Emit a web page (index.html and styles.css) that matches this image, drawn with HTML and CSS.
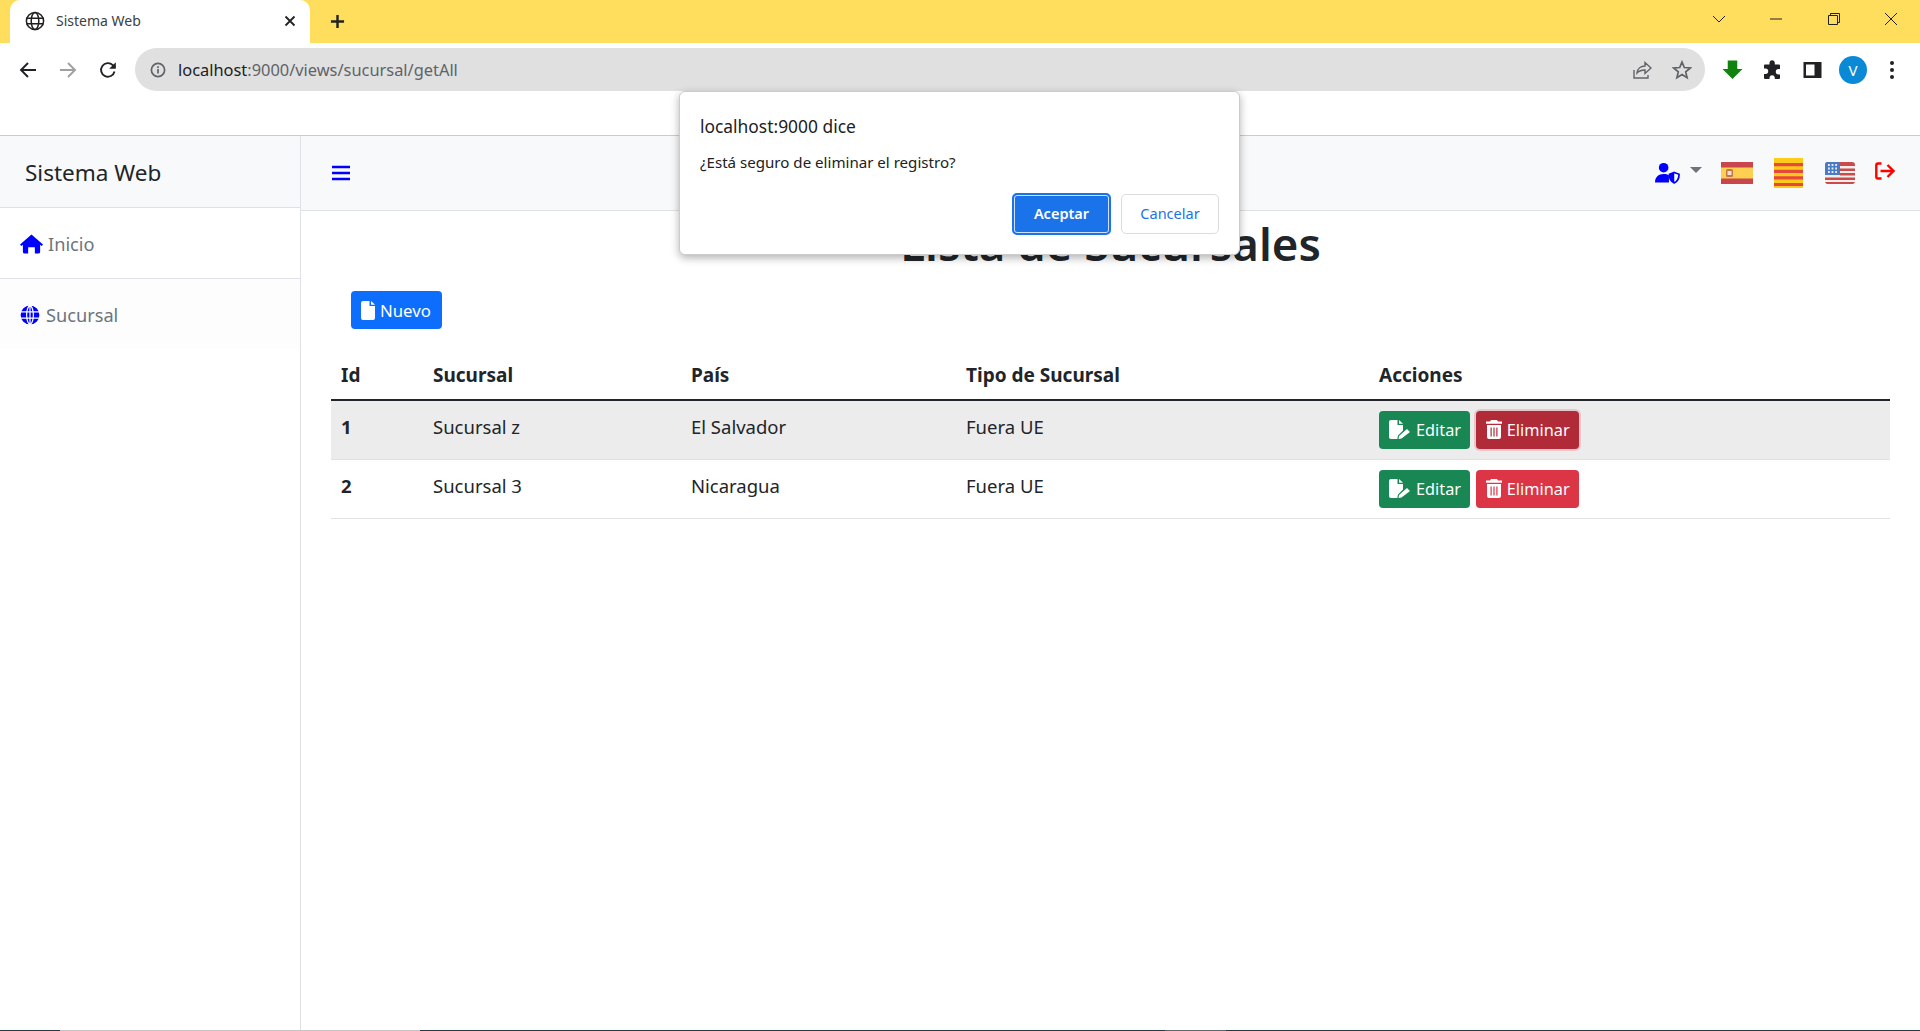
FILE: index.html
```html
<!DOCTYPE html>
<html lang="es">
<head>
  <meta charset="UTF-8" />
  <meta name="viewport" content="width=device-width, initial-scale=1.0"/>
  <title>Sistema Web</title>
  <link rel="stylesheet" href="styles.css">
</head>
<body>
  <!-- Barra de pestañas -->
  <div class="tabstrip">
    <div class="tab">
      <svg class="tab-globe" viewBox="0 0 20 20"><circle cx="10" cy="10" r="8.6"/><ellipse cx="10" cy="10" rx="3.8" ry="8.6"/><path d="M1.4 7.2h17.2M1.4 12.8h17.2"/></svg>
      <span class="tab-title">Sistema Web</span>
      <svg class="tab-close" viewBox="0 0 12 12"><path d="M1.5 1.5l9 9M10.5 1.5l-9 9"/></svg>
    </div>
    <svg class="tab-new" viewBox="0 0 16 16"><path d="M8 1v14M1 8h14"/></svg>
    <div class="window-controls">
      <svg viewBox="0 0 14 8"><path d="M1 1l6 6 6-6"/></svg>
      <svg viewBox="0 0 14 14"><path d="M1 7h12"/></svg>
      <svg viewBox="0 0 14 14"><path d="M1.5 3.5h9v9h-9zM3.5 3.5v-2h9v9h-2"/></svg>
      <svg viewBox="0 0 14 14"><path d="M1 1l12 12M13 1L1 13"/></svg>
    </div>
  </div>

  <!-- Barra de direcciones -->
  <div class="toolbar">
    <div class="nav-buttons">
      <svg viewBox="0 0 18 18"><path d="M17 9H2M9 2L2 9l7 7"/></svg>
      <svg class="disabled" viewBox="0 0 18 18"><path d="M1 9h15M9 2l7 7-7 7"/></svg>
      <svg viewBox="0 0 18 18"><path d="M15.5 10.5A6.8 6.8 0 1 1 13.8 4.2L16 6.4"/><path class="solid" d="M16.8 1.2v6.6h-6.6z"/></svg>
    </div>
    <div class="omnibox">
      <svg class="info-icon" viewBox="0 0 16 16"><circle cx="8" cy="8" r="6.6"/><path d="M8 7v4.6M8 4.2v1.7"/></svg>
      <span class="url"><span class="url-host">localhost</span>:9000/views/sucursal/getAll</span>
      <svg class="omni-share" viewBox="0 0 20 20"><path d="M2 10v8h14v-3M5 13c.5-4.5 4-7 8-7V2.500l6 5.500-6 5.500V10c-3.500 0-6 1-8 3z"/></svg>
      <svg class="omni-star" viewBox="0 0 20 20"><path d="M10 2l2.300 5.500 6 .5-4.600 3.900 1.400 5.800L10 14.600l-5.100 3.100 1.400-5.800L1.700 8l6-.5z"/></svg>
    </div>
    <div class="ext-buttons">
      <svg viewBox="0 0 22 20"><path class="ext-arrow" d="M6 0h10v9h5.500L11 19.500.5 9H6z"/></svg>
      <svg viewBox="0 0 20 20"><path class="ext-dark" d="M7 2.500a2.700 2.700 0 0 1 5.300 0V4.500h4.200a1 1 0 0 1 1 1V9h-1.500a2.700 2.700 0 0 0 0 5.400h1.500V18a1 1 0 0 1-1 1H12.300v-1.500a2.700 2.700 0 0 0-5.300 0V19H2.500a1 1 0 0 1-1-1v-4H3a2.700 2.700 0 0 0 0-5.400H1.500V5.500a1 1 0 0 1 1-1H7z"/></svg>
      <svg class="ext-panel" viewBox="0 0 20 20"><path class="ext-dark" d="M1 2h18v16H1zm2.500 2.500v11H12v-11z"/></svg>
      <span class="avatar">V</span>
      <svg viewBox="0 0 6 20"><circle class="ext-dark" cx="3" cy="3" r="2"/><circle class="ext-dark" cx="3" cy="10" r="2"/><circle class="ext-dark" cx="3" cy="17" r="2"/></svg>
    </div>
  </div>
  <div class="bookmarks"></div>

  <!-- Aplicacion -->
  <div class="app">
    <aside class="sidebar">
      <div class="brand">Sistema Web</div>
      <a class="side-link">
        <svg class="side-home" viewBox="0 0 24 20"><path d="M12 0l12 10.500-1.400 1.500-1.600-1.300V18a2 2 0 0 1-2 2h-3.500v-6.500h-7V20H5a2 2 0 0 1-2-2v-7.300L1.400 12 0 10.500z"/></svg>
        Inicio
      </a>
      <a class="side-link side-link-last">
        <svg class="side-globe" viewBox="0 0 20 20"><circle cx="10" cy="10" r="10"/><path d="M0 6.800h20M0 13.200h20M10 0v20M10 0C5.500 4 5.500 16 10 20M10 0c4.500 4 4.500 16 0 20"/></svg>
        Sucursal
      </a>
    </aside>

    <main class="content">
      <nav class="topnav">
        <svg class="nav-bars" viewBox="0 0 18 16"><path d="M0 2h18M0 8h18M0 14h18"/></svg>
        <div class="nav-right">
          <svg class="nav-user" viewBox="0 0 26 22"><circle cx="9" cy="5.500" r="5"/><path d="M0 21c0-6 3.500-9 9-9 2.200 0 4 .5 5.500 1.400V21z"/><path class="shield" d="M20 10.500l5 1.800c0 4.500-1.500 7.500-5 9-3.500-1.500-5-4.500-5-9z"/><path d="M20 10.500v10.800c-3.500-1.500-5-4.500-5-9z"/></svg>
          <span class="nav-caret"></span>
          <svg class="flag flag-es" viewBox="0 0 32 22"><rect width="32" height="22" fill="#c8464c"/><rect y="5.500" width="32" height="11" fill="#fdd04f"/><rect x="5" y="7" width="7" height="8" rx="1.500" fill="#c9744c"/><path d="M6.500 9h4v4h-4z" fill="#f2e3d0"/></svg>
          <svg class="flag flag-cat" viewBox="0 0 29 30"><rect width="29" height="30" fill="#fdcb1c"/><path d="M0 5h29v3.300H0zM0 11.700h29V15H0zM0 18.300h29v3.300H0zM0 25h29v3H0z" fill="#e8483a"/></svg>
          <svg class="flag flag-us" viewBox="0 0 30 22"><rect width="30" height="22" rx="3" fill="#f3eeee"/><path d="M3 0h24a3 3 0 0 1 3 3v1H0V3a3 3 0 0 1 3-3zM15 6.500h15V9H15zM15 11h15v2.500H15zM0 15.500h30V18H0zM0 20h30a3 3 0 0 1-3 2H3a3 3 0 0 1-3-2z" fill="#cb4a4a"/><path d="M3 0h12v13H0V3a3 3 0 0 1 3-3z" fill="#4a7cc4"/><path d="M3 3h9M3 6.500h9M3 10h9" stroke="#e8edf7" stroke-width="1.800" stroke-dasharray="1.800 1.800"/></svg>
          <svg class="nav-logout" viewBox="0 0 20 18"><path d="M6.500 1.500H3A1.800 1.800 0 0 0 1.300 3.300v11.400A1.800 1.800 0 0 0 3 16.500h3.500M5.500 9h13M12.500 3l6 6-6 6"/></svg>
        </div>
      </nav>

      <div class="page">
        <h1 class="page-title">Lista de Sucursales</h1>
        <button class="btn btn-primary btn-new">
          <svg class="btn-icon" viewBox="0 0 14 19"><path d="M2 0h6.500v5H14v12a2 2 0 0 1-2 2H2a2 2 0 0 1-2-2V2a2 2 0 0 1 2-2zM10 0l4 3.700H10z"/></svg>
          Nuevo
        </button>

        <table class="grid">
          <thead>
            <tr>
              <th class="col-id">Id</th>
              <th class="col-name">Sucursal</th>
              <th class="col-country">País</th>
              <th class="col-type">Tipo de Sucursal</th>
              <th>Acciones</th>
            </tr>
          </thead>
          <tbody>
            <tr class="row-hover">
              <td class="cell-id">1</td>
              <td>Sucursal z</td>
              <td>El Salvador</td>
              <td>Fuera UE</td>
              <td class="cell-actions">
                <button class="btn btn-success">
                  <svg class="btn-icon icon-edit" viewBox="0 0 22 19"><path d="M2 0h6.500v5H14v5.500L9 15.500 8.300 19H2a2 2 0 0 1-2-2V2a2 2 0 0 1 2-2zM10 0l4 3.700H10zM18 9l3 3-8.500 6.500-3 .5.500-3z"/></svg>
                  Editar
                </button>
                <button class="btn btn-danger-active">
                  <svg class="btn-icon icon-trash" viewBox="0 0 16 19"><path d="M5 0h6l1 1.500h4v2.300H0V1.500h4zM1 5h14v12a2 2 0 0 1-2 2H3a2 2 0 0 1-2-2zM4.500 7.500v9h1.200v-9zm2.900 0v9h1.200v-9zm2.900 0v9h1.200v-9z" fill-rule="evenodd"/></svg>
                  Eliminar
                </button>
              </td>
            </tr>
            <tr>
              <td class="cell-id">2</td>
              <td>Sucursal 3</td>
              <td>Nicaragua</td>
              <td>Fuera UE</td>
              <td class="cell-actions">
                <button class="btn btn-success">
                  <svg class="btn-icon icon-edit" viewBox="0 0 22 19"><path d="M2 0h6.500v5H14v5.500L9 15.500 8.300 19H2a2 2 0 0 1-2-2V2a2 2 0 0 1 2-2zM10 0l4 3.700H10zM18 9l3 3-8.500 6.500-3 .5.500-3z"/></svg>
                  Editar
                </button>
                <button class="btn btn-danger">
                  <svg class="btn-icon icon-trash" viewBox="0 0 16 19"><path d="M5 0h6l1 1.500h4v2.300H0V1.500h4zM1 5h14v12a2 2 0 0 1-2 2H3a2 2 0 0 1-2-2zM4.500 7.500v9h1.200v-9zm2.900 0v9h1.200v-9zm2.900 0v9h1.200v-9z" fill-rule="evenodd"/></svg>
                  Eliminar
                </button>
              </td>
            </tr>
          </tbody>
        </table>
      </div>
    </main>
  </div>

  <!-- Borde de la barra de tareas -->
  <div class="screen-edge">
    <span class="edge-dark edge-a"></span>
    <span class="edge-light edge-b"></span>
    <span class="edge-dark edge-c"></span>
    <span class="edge-mid edge-d"></span>
    <span class="edge-dark edge-e"></span>
  </div>

  <!-- Cuadro confirm() -->
  <div class="dialog">
    <div class="dialog-title">localhost:9000 dice</div>
    <div class="dialog-msg">¿Está seguro de eliminar el registro?</div>
    <div class="dialog-actions">
      <button class="dialog-btn dialog-ok">Aceptar</button>
      <button class="dialog-btn dialog-cancel">Cancelar</button>
    </div>
  </div>
</body>
</html>
```

FILE: styles.css
```css
* {
  box-sizing: border-box;
}

html, body {
  height: 100%;
}

body {
  margin: 0;
  font-family: 'Noto Sans', 'Open Sans', sans-serif;
  color: #212529;
  background-color: white;
  display: flex;
  flex-direction: column;
  min-height: 100vh;
  overflow: hidden;
}

svg {
  display: block;
  flex: none;
}

/* Pestañas */
.tabstrip {
  height: 43px;
  background-color: #ffde5e;
  display: flex;
  align-items: flex-end;
  padding-left: 10px;
}

.tab {
  width: 300px;
  height: 43px;
  background: white;
  border-radius: 10px 10px 0 0;
  display: flex;
  align-items: center;
  padding: 0 14px 2px 15px;
  gap: 11px;
}

.tab-globe {
  width: 20px;
  height: 20px;
  fill: none;
  stroke: #1f1f1f;
  stroke-width: 1.5;
}

.tab-title {
  flex: 1;
  font-size: 14px;
  color: #3c4043;
}

.tab-close {
  width: 12px;
  height: 12px;
  fill: none;
  stroke: #222;
  stroke-width: 1.8;
}

.tab-new {
  width: 15px;
  height: 15px;
  margin: 0 0 14px 20px;
  fill: none;
  stroke: #222;
  stroke-width: 2.6;
}

.window-controls {
  margin-left: auto;
  width: 208px;
  height: 43px;
  display: flex;
  align-items: center;
  justify-content: space-between;
  padding: 0 22px 6px 0;
}

.window-controls svg {
  width: 14px;
  height: 14px;
  fill: none;
  stroke: #222;
  stroke-width: 1;
}

/* Barra de direcciones */
.toolbar {
  height: 48px;
  display: flex;
  align-items: center;
  padding: 5px 0 0 19px;
  background: white;
}

.nav-buttons {
  display: flex;
  gap: 22px;
  width: 116px;
}

.nav-buttons svg {
  width: 18px;
  height: 18px;
  fill: none;
  stroke: #202124;
  stroke-width: 1.9;
}

.nav-buttons svg.disabled {
  stroke: #a0a0a0;
}

.nav-buttons .solid {
  fill: #202124;
  stroke: none;
}

.omnibox {
  width: 1570px;
  height: 43px;
  background-color: #e0e0e0;
  border-radius: 22px;
  display: flex;
  align-items: center;
  padding: 0 13px 0 15px;
}

.info-icon {
  width: 16px;
  height: 16px;
  fill: none;
  stroke: #5f6368;
  stroke-width: 1.7;
}

.url {
  margin-left: 12px;
  flex: 1;
  font-size: 16.4px;
  color: #5f6368;
}

.url-host {
  color: #202124;
}

.omni-share, .omni-star {
  width: 20px;
  height: 20px;
  fill: none;
  stroke: #5f6368;
  stroke-width: 1.4;
}

.omni-star {
  margin-left: 20px;
  stroke-width: 1.7;
}

.ext-buttons {
  flex: 1;
  display: flex;
  align-items: center;
  padding-left: 17px;
}

.ext-buttons svg {
  width: 21px;
  height: 20px;
  margin-right: 19px;
}

.ext-buttons .ext-panel {
  margin-right: 16px;
}

.ext-buttons svg:last-child {
  width: 6px;
  margin: 0 0 0 22px;
}

.ext-arrow {
  fill: #12820e;
}

.ext-dark {
  fill: #202124;
  fill-rule: evenodd;
}

.avatar {
  width: 28px;
  height: 28px;
  border-radius: 50%;
  background-color: #0a8ad6;
  color: white;
  font-size: 15px;
  display: flex;
  align-items: center;
  justify-content: center;
}

.bookmarks {
  height: 45px;
  background: white;
  border-bottom: 1px solid #ccc;
}

/* Aplicacion */
.app {
  flex: 1;
  display: flex;
  min-height: 0;
}

.sidebar {
  width: 301px;
  border-right: 1px solid #dee2e6;
  flex: none;
}

.brand {
  height: 72px;
  background-color: #f8f9fa;
  border-bottom: 1px solid #dee2e6;
  font-size: 22.5px;
  padding: 2px 0 0 25px;
  display: flex;
  align-items: center;
}

.side-link {
  height: 71px;
  display: flex;
  align-items: center;
  gap: 5px;
  padding: 1px 0 0 20px;
  font-size: 18.2px;
  color: #6c757d;
  border-bottom: 1px solid #dee2e6;
}

.side-link-last {
  height: 70px;
  background-color: #fdfdfd;
  border-bottom: none;
  gap: 6px;
}

.side-home {
  width: 23px;
  height: 20px;
  fill: blue;
}

.side-globe {
  width: 20px;
  height: 20px;
  fill: blue;
  stroke: white;
  stroke-width: 1.2;
}

.content {
  flex: 1;
  min-width: 0;
}

.topnav {
  height: 75px;
  background-color: #f8f9fa;
  border-bottom: 1px solid #dee2e6;
  display: flex;
  align-items: center;
  justify-content: space-between;
  padding: 0 25px 0 31px;
}

.nav-bars {
  width: 18px;
  height: 16px;
  fill: none;
  stroke: blue;
  stroke-width: 2.4;
}

.nav-right {
  display: flex;
  align-items: center;
}

.nav-user {
  width: 25px;
  height: 22px;
  fill: blue;
}

.nav-user .shield {
  fill: white;
  stroke: blue;
  stroke-width: 1.8;
}

.nav-caret {
  width: 0;
  height: 0;
  border: 6px solid transparent;
  border-top-color: #6c757d;
  border-bottom: none;
  margin: 0 19px 6px 10px;
}

.flag-es {
  width: 32px;
  height: 22px;
  margin-right: 21px;
}

.flag-cat {
  width: 29px;
  height: 30px;
  margin-right: 22px;
}

.flag-us {
  width: 30px;
  height: 22px;
  margin-right: 20px;
}

.nav-logout {
  width: 20px;
  height: 18px;
  margin-bottom: 4px;
  fill: none;
  stroke: red;
  stroke-width: 2.4;
}

.page {
  padding: 0 30px;
}

.page-title {
  margin: 0;
  height: 80px;
  text-align: center;
  font-size: 45.5px;
  line-height: 64px;
  font-weight: 600;
}

.btn {
  display: inline-flex;
  align-items: center;
  gap: 5px;
  height: 38px;
  border: none;
  border-radius: 4px;
  padding: 0 10px;
  font-family: inherit;
  font-size: 16.3px;
  color: white;
}

.btn-icon {
  width: 14px;
  height: 19px;
  fill: white;
}

.icon-edit {
  width: 22px;
}

.icon-trash {
  width: 16px;
}

.btn-new {
  width: 91px;
  margin-left: 20px;
  background-color: #0d6efd;
  font-size: 16.8px;
}

.btn-success {
  width: 91px;
  background-color: #198754;
}

.btn-danger, .btn-danger-active {
  width: 103px;
  background-color: #dc3545;
  margin-left: 1px;
}

.btn-danger-active {
  background-color: #b02a37;
  box-shadow: 0 0 0 2px rgba(225, 83, 97, 0.25);
}

.grid {
  width: 100%;
  margin-top: 22px;
  border-collapse: collapse;
  table-layout: fixed;
  font-size: 18.5px;
}

.grid th {
  height: 49px;
  padding: 0 10px;
  text-align: left;
  font-size: 19px;
  font-weight: 700;
  border-bottom: 2px solid #212529;
}

.grid td {
  height: 59px;
  padding: 0 10px 6px;
  border-bottom: 1px solid #dee2e6;
}

.col-id {
  width: 92px;
}

.col-name {
  width: 258px;
}

.col-country {
  width: 275px;
}

.col-type {
  width: 413px;
}

.grid .cell-id {
  font-weight: 700;
}

.grid .cell-actions {
  padding-bottom: 0;
}

.row-hover td {
  background-color: #ececec;
}

/* Borde inferior */
.screen-edge {
  height: 1px;
  display: flex;
  flex: none;
}

.edge-dark {
  background-color: #263a44;
}

.edge-light {
  background-color: #c4c4c4;
}

.edge-mid {
  background-color: #5a666c;
}

.edge-a {
  width: 60px;
}

.edge-b {
  width: 360px;
}

.edge-c {
  width: 745px;
}

.edge-d {
  width: 61px;
}

.edge-e {
  flex: 1;
}

/* Dialogo */
.dialog {
  position: absolute;
  left: 679px;
  top: 91px;
  width: 561px;
  height: 164px;
  background: white;
  border: 1px solid #ccc;
  border-radius: 6px;
  box-shadow: 0 3px 9px rgba(0, 0, 0, 0.3);
  padding: 0 20px;
}

.dialog-title {
  margin-top: 21px;
  font-size: 17.4px;
  line-height: 26px;
  color: #202124;
}

.dialog-msg {
  margin-top: 12px;
  font-size: 15.1px;
  line-height: 22px;
  color: #202124;
}

.dialog-actions {
  display: flex;
  justify-content: flex-end;
  align-items: center;
  gap: 10px;
  margin-top: 20px;
}

.dialog-btn {
  font-family: inherit;
  font-size: 14.5px;
  width: 98px;
  height: 40px;
  padding: 0 0 2px;
  border-radius: 5px;
  background: white;
  border: 1px solid #dadce0;
  color: #1a73e8;
}

.dialog-ok {
  width: 99px;
  height: 42px;
  font-weight: 600;
  color: white;
  background-color: #1a73e8;
  border: 2px solid #1a73e8;
  box-shadow: inset 0 0 0 1px #cfe0fb;
}
```
